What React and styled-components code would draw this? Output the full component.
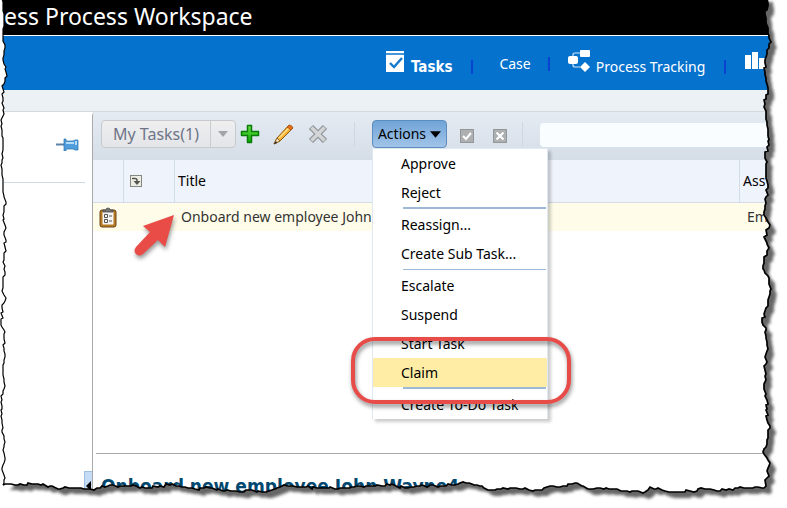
import React from "react";
import styled, { createGlobalStyle } from "styled-components";

const GlobalStyle = createGlobalStyle`
  * { box-sizing: border-box; }
  body {
    margin: 0;
    background: #fff;
    color: #000;
    font: 14px/20px "Noto Sans", "DejaVu Sans Condensed", sans-serif;
  }
  button, input { font: inherit; color: inherit; }
`;

const Page = styled.div`
  position: relative;
  display: flex;
  flex-direction: column;
  height: 100vh;
  overflow: hidden;
`;

const Banner = styled.header`
  flex: none;
  height: 36px;
  padding-left: 4px;
  background: #000;
  border-bottom: 1px solid #fff;
`;

const BannerTitle = styled.h1`
  margin: 0;
  color: #fff;
  font: 400 23px/32px "Noto Sans", sans-serif;
  white-space: nowrap;
`;

const Nav = styled.nav`
  flex: none;
  display: flex;
  height: 54px;
  padding: 14px 0 0 385px;
  background: #0572ce;
  white-space: nowrap;
`;

const NavLink = styled.a`
  display: flex;
  flex: none;
  align-items: ${(p) => (p.$plain ? "center" : "flex-end")};
  gap: 6px;
  height: ${(p) => (p.$plain ? "28px" : "27px")};
  color: #fff;
  font-family: ${(p) => (p.$current ? '"DejaVu Sans Condensed", sans-serif' : "inherit")};
  font-size: ${(p) => (p.$current ? "15px" : "14px")};
  font-weight: ${(p) => (p.$current ? 700 : 400)};
  text-decoration: none;
  svg { align-self: flex-start; }
`;

const NavDivider = styled.span`
  flex: none;
  width: 2px;
  height: 14px;
  margin: ${(p) => (p.$high ? "7px" : "10px")} ${(p) => p.$after}px 0 ${(p) => p.$before}px;
  background: #0a43cf;
`;

const Strip = styled.div`
  flex: none;
  height: 22px;
  background: #ecf1f5;
  border-bottom: 1px solid #d2d9e1;
`;

const Body = styled.div`
  flex: 1;
  display: flex;
  min-height: 0;
`;

const Side = styled.aside`
  flex: none;
  display: flex;
  flex-direction: column;
  width: 92px;
  padding-left: 4px;
`;

const SideHeader = styled.div`
  flex: none;
  display: flex;
  justify-content: flex-end;
  height: 71px;
  margin-right: 7px;
  padding: 26px 6px 0 0;
  border-bottom: 1px solid #d0dae3;
`;

const PlainButton = styled.button`
  display: flex;
  flex: none;
  padding: 0;
  border: 0;
  background: none;
`;

const Collapse = styled.button`
  display: flex;
  align-items: flex-start;
  justify-content: flex-end;
  align-self: flex-end;
  width: 8px;
  height: 37px;
  margin-top: auto;
  padding: 9px 1px 0 0;
  border: 1px solid #9dbfe2;
  border-right: 0;
  background: #c5dcf6;
`;

const Main = styled.main`
  flex: 1;
  display: flex;
  flex-direction: column;
  min-width: 0;
  border-left: 1px solid #a9a9ab;
  border-top-left-radius: 4px;
`;

const Toolbar = styled.div`
  flex: none;
  display: flex;
  align-items: flex-start;
  height: 48px;
  padding: 8px 0 0 8px;
  background: linear-gradient(#e4ebf3, #d5dde7);
  border-top-left-radius: 4px;
`;

const Split = styled.div`
  display: flex;
  flex: none;
  width: 135px;
  height: 28px;
  border: 1px solid #c6c9ce;
  border-radius: 4px;
  background: linear-gradient(#efeff0, #e3e5e8);
`;

const SplitMain = styled.button`
  flex: 1;
  padding: 0;
  border: 0;
  border-right: 1px solid #c9cdd1;
  background: none;
  color: #6f7587;
  font-size: 16px;
  white-space: nowrap;
`;

const SplitArrow = styled(PlainButton)`
  width: 24px;
  align-items: center;
  justify-content: center;
`;

const IconGroup = styled.div`
  display: flex;
  flex: none;
  gap: 13px;
  padding: 4px 0 0 4px;
`;

const Rule = styled.span`
  flex: none;
  width: 1px;
  height: 24px;
  margin: 2px ${(p) => p.$after}px 0 ${(p) => p.$before}px;
  background: #cfd7e0;
`;

const MenuWrap = styled.div`
  position: relative;
  flex: none;
`;

const ActionsButton = styled.button`
  display: flex;
  align-items: center;
  justify-content: center;
  gap: 4px;
  width: 75px;
  height: 28px;
  padding: 0;
  border: 1px solid #5c8dbe;
  border-radius: 4px;
  background: linear-gradient(#70a4d8, #a2c4e8);
  white-space: nowrap;
`;

const Menu = styled.div`
  position: absolute;
  z-index: 2;
  top: 28px;
  left: 0;
  width: 176px;
  border: 1px solid #dfe9f3;
  border-bottom: 0;
  background: #fff;
  box-shadow: 3px 3px 3px rgba(0, 0, 0, 0.2);
`;

const MenuItem = styled.button`
  display: block;
  width: 100%;
  height: 29px;
  padding: 0 0 0 28px;
  border: 0;
  background: ${(p) => (p.$active ? "#ffeda6" : "#fff")};
  text-align: left;
  white-space: nowrap;
`;

const MenuRule = styled.hr`
  height: 3px;
  margin: 0 1px 0 30px;
  border: 0 solid #fff;
  border-width: ${(p) => (p.$thin ? "1px 0" : "0 0 1px")};
  background: #9db9d8;
`;

const ItemWrap = styled.div`
  position: relative;
`;

const Callout = styled.span`
  position: absolute;
  z-index: 3;
  inset: -21px -24px -17px -22px;
  border: 4px solid #e84c48;
  border-radius: 24px;
  filter: drop-shadow(1px 3px 2px rgba(0, 0, 0, 0.45));
  pointer-events: none;
`;

const ToggleGroup = styled.div`
  display: flex;
  flex: none;
  gap: 19px;
  padding: 9px 0 0 13px;
`;

const Search = styled.input`
  flex: 1;
  min-width: 0;
  height: 24px;
  margin-top: 3px;
  padding: 0 8px;
  border: 0;
  border-radius: 4px 0 0 4px;
  background: #f9fdff;
`;

const Table = styled.table`
  flex: none;
  width: 100%;
  table-layout: fixed;
  border-collapse: separate;
  border-spacing: 0;
`;

const Col = styled.col`
  width: ${(p) => p.$width};
`;

const Th = styled.th`
  height: 43px;
  padding: 0 0 0 ${(p) => p.$pad || 3}px;
  border-bottom: 1px solid #d3dde8;
  border-left: ${(p) => (p.$first ? "0" : "1px solid #d3dde8")};
  background: #eff3fb;
  font-weight: 400;
  text-align: left;
  svg { display: block; }
`;

const Td = styled.td`
  position: relative;
  height: 28px;
  padding: 0 0 0 ${(p) => p.$pad || 0}px;
  background: #fffdea;
  color: #333;
  white-space: nowrap;
  svg { display: block; }
`;

const Pointer = styled.svg`
  position: absolute;
  top: 9px;
  left: -42px;
  overflow: visible;
  filter: drop-shadow(1px 3px 2px rgba(0, 0, 0, 0.4));
`;

const Detail = styled.section`
  flex: none;
  height: 55px;
  margin: auto 0 0 3px;
  padding: 20px 0 0 5px;
  border-top: 1px solid #a9a9a9;
`;

const DetailTitle = styled.h2`
  margin: 0;
  color: #00486f;
  font: 700 19px/24px "DejaVu Sans Condensed", sans-serif;
  white-space: nowrap;
`;

const Edge = styled.svg`
  position: absolute;
  z-index: 5;
  inset: 0;
  width: 100%;
  height: 100%;
  pointer-events: none;
`;

const LEFT = [[2,-4],[3,8],[4,20],[3,32],[5,48],[3,58],[6,72],[4,84],[2,94],[3,110],[2,130],[3,144],[2,160],[2,175],[3,190],[6,204],[3,215],[5,230],[5,247],[3,262],[5,275],[2,291],[6,298],[2,308],[1,325],[5,332],[3,345],[5,354],[3,375],[4,382],[2,400],[2,420],[2,430],[5,442],[3,450],[5,460],[2,468],[4,480],[3,485]];
const BOTTOM = [[3,485],[15,485],[35,484],[50,486],[60,489],[65,487],[75,488],[90,489],[100,488],[108,486],[120,486],[133,485],[145,488],[160,486],[170,485],[185,487],[195,489],[210,488],[225,491],[240,492],[250,490],[262,492],[272,490],[282,486],[300,487],[320,488],[340,488],[360,486],[375,486],[387,484],[405,488],[420,486],[440,486],[455,485],[463,482],[480,486],[488,490],[510,488],[520,489],[538,490],[550,486],[560,487],[575,483],[590,489],[600,488],[617,489],[630,492],[645,492],[650,487],[665,491],[690,491],[705,489],[720,491],[735,488],[750,488],[762,488]];
const RIGHT = [[764,488],[767,478],[770,463],[763,452],[770,428],[767,420],[767,400],[764,387],[765,370],[767,345],[766,330],[762,322],[770,294],[769,278],[763,269],[764,257],[769,248],[764,237],[770,225],[764,215],[768,185],[765,155],[769,145],[767,125],[764,107],[768,90],[765,75],[765,60],[771,42],[768,33],[766,18],[767,-4]];

const roughen = (points, seed) => {
  const out = [];
  points.forEach(([x, y], i) => {
    out.push([x, y]);
    const next = points[i + 1];
    if (!next) return;
    const steps = Math.max(1, Math.round(Math.hypot(next[0] - x, next[1] - y) / 3));
    for (let s = 1; s < steps; s += 1) {
      const n = Math.sin((i * 17 + s) * 12.9898 + seed) * 43758.5453;
      const m = Math.round((n - Math.floor(n)) * 2) - 1;
      out.push([Math.round(x + ((next[0] - x) * s) / steps + m), Math.round(y + ((next[1] - y) * s) / steps + m)]);
    }
  });
  return out;
};
const toPath = (pts) => pts.map((p) => p.join(" ")).join("L");
const left = toPath(roughen(LEFT, 1));
const rest = toPath([...roughen(BOTTOM, 2), ...roughen(RIGHT, 3)]);
const sheet = `M${left}L${rest}Z`;

function TornEdge() {
  return (
    <Edge viewBox="0 0 787 508" preserveAspectRatio="none" aria-hidden="true">
      <defs>
        <clipPath id="outside"><path clipRule="evenodd" d={`M-9 -9H800V520H-9Z${sheet}`} /></clipPath>
        <filter id="soft"><feGaussianBlur stdDeviation="1.5" /></filter>
      </defs>
      <g clipPath="url(#outside)">
        <rect width="787" height="508" fill="#fff" />
        <path d={`M8 4L8 480L${rest}Z`} transform="translate(6 6)" fill="#666" filter="url(#soft)" />
        <rect width="10" height="480" fill="#fff" />
      </g>
      <path d={`M${left}`} fill="none" stroke="#000" strokeWidth="1.2" />
      <path d={`M${rest}`} fill="none" stroke="#000" strokeWidth="1.7" />
    </Edge>
  );
}

const TasksIcon = () => (
  <svg width="20" height="22" viewBox="0 0 20 22" aria-hidden="true">
    <path fill="#fff" d="M1 1h18v2H1zM1 5h18v17H1z" />
    <path d="M1 4h18" stroke="#86b9e6" />
    <path d="M5 13l4 4 8-9" fill="none" stroke="#1679d0" strokeWidth="2.4" />
  </svg>
);
const FlowIcon = () => (
  <svg width="22" height="22" viewBox="0 0 22 22" aria-hidden="true">
    <g fill="#fff">
      <rect x="12" y="0" width="10" height="7" rx="1" />
      <rect x="0" y="6" width="10" height="8" rx="2" />
      <path d="M17 12l5 5-5 5-5-5z" />
    </g>
    <path d="M5 6V5q0-2 2-2h5M5 14v1q0 2 2 2h5" fill="none" stroke="#cfe3f6" strokeWidth="1.2" />
  </svg>
);
const ChartIcon = () => (
  <svg width="22" height="20" viewBox="0 0 22 20" aria-hidden="true">
    <path fill="#fff" d="M0 5h6v14H0zM7 2h6v17H7zM14 8h6v11h-6z" />
  </svg>
);
const PinIcon = () => (
  <svg width="23" height="13" viewBox="0 0 23 13" aria-hidden="true">
    <path d="M0 6.500h9" stroke="#5c83a8" strokeWidth="2" />
    <path d="M8 1h2v2h7l2-1h3v10h-3l-2-1h-7v2H8z" fill="#4f9ddc" stroke="#2870ac" strokeWidth=".7" />
    <path d="M10 5h8M20 3v4" stroke="#b5dcfa" strokeWidth="2" />
  </svg>
);
const PlusIcon = () => (
  <svg width="20" height="20" viewBox="0 0 20 20" aria-hidden="true">
    <defs><linearGradient id="plus" x2="0" y2="1"><stop stopColor="#6fe04c" /><stop offset="1" stopColor="#08a800" /></linearGradient></defs>
    <path d="M7.500 1.500h4v6h7v4h-7v7h-4v-7h-6v-4h6z" fill="url(#plus)" stroke="#087b08" strokeWidth="1.500" strokeLinejoin="round" />
  </svg>
);
const PencilIcon = () => (
  <svg width="22" height="22" viewBox="0 0 22 22" aria-hidden="true">
    <path d="M1 20l3-6L16 1l4 3L7 17z" fill="#f4b12f" stroke="#8d5b16" />
    <path d="M4 14l3 3-6 3z" fill="#f5deb0" stroke="#7e5520" strokeWidth=".8" />
    <path d="M1 20l2-3 1 2z" fill="#222" />
    <path d="M6 14L16 4" stroke="#ffe08a" strokeWidth="1.500" />
    <path d="M14 3l2-2q3 0 4 3l-2 2z" fill="#e2701e" stroke="#a84c10" strokeWidth=".7" />
  </svg>
);
const DeleteIcon = () => (
  <svg width="20" height="20" viewBox="0 0 20 20" aria-hidden="true">
    <path d="M3 3l14 14M17 3L3 17" stroke="#8f9398" strokeWidth="6" />
    <path d="M3.500 3.500l13 13M16.500 3.500l-13 13" stroke="#d2d4d6" strokeWidth="3.600" />
  </svg>
);
const BoxIcon = ({ d }) => (
  <svg width="14" height="14" viewBox="0 0 14 14" aria-hidden="true">
    <rect x=".5" y=".5" width="13" height="13" fill="#adafb1" stroke="#94979a" />
    <path d={d} fill="none" stroke="#fff" strokeWidth="2" />
  </svg>
);
const Caret = ({ color, size }) => (
  <svg width={size} height={size} viewBox="0 0 10 10" aria-hidden="true"><path d="M0 2h10L5 8z" fill={color} /></svg>
);
const DetachIcon = () => (
  <svg width="12" height="12" viewBox="0 0 12 12" aria-hidden="true">
    <rect x=".5" y=".5" width="11" height="11" fill="#eeeee8" stroke="#85877e" />
    <path d="M2 3.500h3q2 0 2 2V7" fill="none" stroke="#55574f" strokeWidth="1.500" />
    <path d="M3.500 6h7L7 10z" fill="#55574f" />
  </svg>
);
const ClipboardIcon = () => (
  <svg width="18" height="21" viewBox="0 0 18 21" aria-hidden="true">
    <rect x="1" y="3" width="16" height="17" rx="2" fill="#b77a22" stroke="#6c4618" />
    <rect x="3.500" y="5" width="11" height="12.500" fill="#f4f4f2" />
    <path d="M4 5V3h3q0-2 2-2t2 2h3v2z" fill="#777" stroke="#444" strokeWidth=".8" />
    <path d="M5.500 7.500h3v3h-3zM5.500 12.500h3v3h-3zM10 9h3M10 14h3" fill="none" stroke="#555" />
  </svg>
);

export default function App() {
  return (
    <>
      <GlobalStyle />
      <Page>
        <Banner><BannerTitle>ess Process Workspace</BannerTitle></Banner>
        <Nav aria-label="Workspace">
          <NavLink href="#tasks" $current><TasksIcon />Tasks</NavLink>
          <NavDivider $before={19} $after={26} />
          <NavLink href="#case" $plain>Case</NavLink>
          <NavDivider $high $before={17} $after={18} />
          <NavLink href="#tracking"><FlowIcon />Process Tracking</NavLink>
          <NavDivider $before={19} $after={19} />
          <NavLink href="#dashboard" aria-label="Dashboard"><ChartIcon /></NavLink>
        </Nav>
        <Strip />
        <Body>
          <Side>
            <SideHeader><PlainButton aria-label="Pin panel"><PinIcon /></PlainButton></SideHeader>
            <Collapse aria-label="Collapse panel">
              <svg width="5" height="10" viewBox="0 0 5 10"><path d="M5 0v10L0 5z" /></svg>
            </Collapse>
          </Side>
          <Main>
            <Toolbar>
              <Split>
                <SplitMain>My Tasks(1)</SplitMain>
                <SplitArrow aria-label="Choose view"><Caret color="#a2a4a8" size={10} /></SplitArrow>
              </Split>
              <IconGroup>
                <PlainButton aria-label="Add"><PlusIcon /></PlainButton>
                <PlainButton aria-label="Edit"><PencilIcon /></PlainButton>
                <PlainButton aria-label="Delete"><DeleteIcon /></PlainButton>
              </IconGroup>
              <Rule $before={26} $after={17} />
              <MenuWrap>
                <ActionsButton aria-haspopup="menu" aria-expanded="true">
                  Actions<Caret color="#000" size={11} />
                </ActionsButton>
                <Menu role="menu">
                  <MenuItem role="menuitem">Approve</MenuItem>
                  <MenuItem role="menuitem">Reject</MenuItem>
                  <MenuRule />
                  <MenuItem role="menuitem">Reassign...</MenuItem>
                  <MenuItem role="menuitem">Create Sub Task...</MenuItem>
                  <MenuRule $thin />
                  <MenuItem role="menuitem">Escalate</MenuItem>
                  <MenuItem role="menuitem">Suspend</MenuItem>
                  <MenuItem role="menuitem">Start Task</MenuItem>
                  <ItemWrap>
                    <MenuItem role="menuitem" $active>Claim</MenuItem>
                    <Callout />
                  </ItemWrap>
                  <MenuRule />
                  <MenuItem role="menuitem">Create To-Do Task</MenuItem>
                </Menu>
              </MenuWrap>
              <ToggleGroup>
                <PlainButton aria-label="Approve task"><BoxIcon d="M3 7l3 3 5-6" /></PlainButton>
                <PlainButton aria-label="Reject task"><BoxIcon d="M3.500 3.500l7 7M10.500 3.500l-7 7" /></PlainButton>
              </ToggleGroup>
              <Rule $before={15} $after={17} />
              <Search type="text" aria-label="Search tasks" />
            </Toolbar>
            <Table>
              <colgroup>
                <Col $width="30px" />
                <Col $width="51px" />
                <Col $width="auto" />
                <Col $width="48px" />
              </colgroup>
              <thead>
                <tr>
                  <Th $first />
                  <Th $pad={6}><DetachIcon /></Th>
                  <Th>Title</Th>
                  <Th>Ass</Th>
                </tr>
              </thead>
              <tbody>
                <tr>
                  <Td $pad={6}><ClipboardIcon /></Td>
                  <Td />
                  <Td $pad={7}>
                    Onboard new employee John
                    <Pointer width="43" height="44" viewBox="0 0 43 44" aria-hidden="true">
                      <path d="M42 3L33 35L26 28L11 42Q7 45 4 42Q1 39 4 35L18 20L11 14Z" fill="#e94b46" />
                    </Pointer>
                  </Td>
                  <Td $pad={8}>Em</Td>
                </tr>
              </tbody>
            </Table>
            <Detail><DetailTitle>Onboard new employee John Wayne4</DetailTitle></Detail>
          </Main>
        </Body>
        <TornEdge />
      </Page>
    </>
  );
}
